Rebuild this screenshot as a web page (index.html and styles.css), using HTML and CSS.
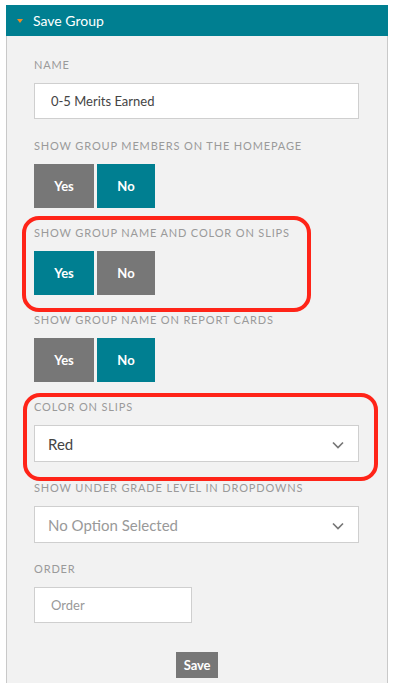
FILE: index.html
```html
<!DOCTYPE html>
<html>
<head>
<meta charset="utf-8">
<link rel="stylesheet" href="styles.css">
</head>
<body>
<div class="wrap">
  <div class="header">
    <span class="caret"></span>
    <span class="title">Save Group</span>
  </div>
  <div class="panel">
    <div class="field f-input">
      <div class="label">Name</div>
      <div class="input wide">0-5 Merits Earned</div>
    </div>
    <div class="field f-toggle">
      <div class="label">Show group members on the homepage</div>
      <div class="toggle"><span class="btn off">Yes</span><span class="btn on">No</span></div>
    </div>
    <div class="field f-toggle mark mark-a">
      <div class="label">Show group name and color on slips</div>
      <div class="toggle"><span class="btn on">Yes</span><span class="btn off">No</span></div>
    </div>
    <div class="field f-toggle">
      <div class="label">Show group name on report cards</div>
      <div class="toggle"><span class="btn off">Yes</span><span class="btn on">No</span></div>
    </div>
    <div class="field f-select mark mark-b">
      <div class="label">Color on slips</div>
      <div class="select">
        <span class="value">Red</span>
        <svg class="chev" width="12" height="8" viewBox="0 0 12 8"><polyline points="1,1.5 6,6.5 11,1.5" fill="none" stroke="#777" stroke-width="1.7"/></svg>
      </div>
    </div>
    <div class="field f-select">
      <div class="label">Show under grade level in dropdowns</div>
      <div class="select">
        <span class="value muted">No Option Selected</span>
        <svg class="chev" width="12" height="8" viewBox="0 0 12 8"><polyline points="1,1.5 6,6.5 11,1.5" fill="none" stroke="#777" stroke-width="1.7"/></svg>
      </div>
    </div>
    <div class="field f-input">
      <div class="label">Order</div>
      <div class="input short muted">Order</div>
    </div>
    <div class="actions">
      <span class="save">Save</span>
    </div>
  </div>
</div>
</body>
</html>
```
FILE: styles.css
```css
* { box-sizing: border-box; }
html, body { margin: 0; padding: 0; background: #fff; }
body { font-family: Lato, "Noto Sans", sans-serif; color: #333; }

.wrap { margin: 5px 0 0 6px; width: 382px; }

.header {
  height: 31px;
  background: #007f91;
  display: flex;
  align-items: center;
  padding-left: 11px;
}
.caret {
  width: 0; height: 0;
  border-left: 3.5px solid transparent;
  border-right: 3.5px solid transparent;
  border-top: 4px solid #f08a24;
  margin-right: 10px;
  margin-top: 1px;
}
.title { color: #fff; font-size: 14px; }

.panel {
  background: #f2f2f2;
  border-left: 1px solid #c9c9c9;
  border-right: 1px solid #c9c9c9;
  padding: 22px 0 5px 27px;
  height: 647px;
}

.field { position: relative; }
.f-input { margin-bottom: 20px; }
.f-toggle { margin-bottom: 18px; }
.f-select { margin-bottom: 19px; }

.label {
  font-size: 11px;
  line-height: 13px;
  letter-spacing: 0.85px;
  text-transform: uppercase;
  color: #9a9a9a;
  margin-bottom: 12px;
}

.input, .select {
  background: #fff;
  border: 1px solid #cfcfcf;
  display: flex;
  align-items: center;
  color: #444;
}
.input { height: 36px; font-size: 13px; padding-left: 16px; }
.input.wide { width: 325px; }
.input.short { width: 158px; }
.muted { color: #999; }

.select {
  height: 37px;
  width: 325px;
  padding: 0 14px 0 13px;
  justify-content: space-between;
  font-size: 15px;
}
.chev { display: block; margin-top: 2px; }

.toggle { display: flex; gap: 3px; }
.btn {
  width: 60px;
  height: 44px;
  display: flex;
  align-items: center;
  justify-content: center;
  color: #fff;
  font-weight: bold;
  font-size: 13px;
}
.btn + .btn { width: 58px; }
.btn.on { background: #007f91; }
.btn.off { background: #777; }

.mark::after {
  content: "";
  position: absolute;
  border: 4px solid #ff2418;
  border-radius: 17px;
  pointer-events: none;
}
.mark-a::after { left: -12px; top: -10px; width: 281px; height: 88px; }
.mark-b::after { left: -11px; top: -7px; width: 347px; height: 80px; }

.actions { display: flex; justify-content: center; padding-right: 27px; margin-top: 29px; }
.save {
  background: #777;
  color: #fff;
  font-weight: bold;
  font-size: 13px;
  height: 26px;
  width: 42px;
  display: flex;
  align-items: center;
  justify-content: center;
  letter-spacing: -0.2px;
}
```
